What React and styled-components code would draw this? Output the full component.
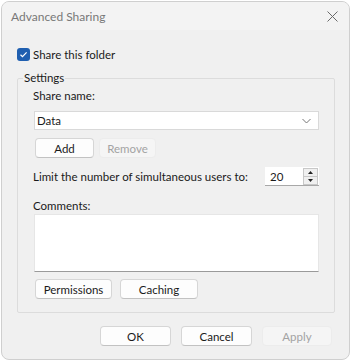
import React from "react";
import styled, { createGlobalStyle } from "styled-components";

const GlobalStyle = createGlobalStyle`
  html, body {
    margin: 0;
    padding: 0;
    background: #ffffff;
  }
  body {
    font-family: Lato, "Noto Sans", sans-serif;
    font-size: 11.5px;
    color: #1a1a1a;
  }
`;

const Window = styled.div`
  box-sizing: border-box;
  width: 349px;
  height: 359px;
  margin: 1px 0 0 1px;
  border: 1px solid #cfcfcf;
  border-radius: 8px;
  background: #f0f0f0;
  overflow: hidden;
  display: flex;
  flex-direction: column;
`;

const TitleBar = styled.div`
  flex-shrink: 0;
  height: 28px;
  display: flex;
  align-items: center;
  justify-content: space-between;
  padding: 0 11px 0 9px;
  background: #f3f3f3;
  color: #787878;
  font-size: 12px;
`;

const Close = styled.svg`
  width: 11px;
  height: 11px;
`;

const Body = styled.div`
  display: flex;
  flex-direction: column;
  padding: 17px 15px 0 15px;
`;

const CheckRow = styled.label`
  display: flex;
  align-items: center;
  gap: 3px;
  height: 14px;
`;

const CheckBox = styled.span`
  width: 13px;
  height: 13px;
  border-radius: 3px;
  background: #1f5fb0;
  display: flex;
  align-items: center;
  justify-content: center;
`;

const Group = styled.fieldset`
  margin: 9px 0 0 0;
  padding: 0 5px;
  width: 318px;
  box-sizing: border-box;
  border: 1px solid #dcdcdc;
  border-radius: 2px;
`;

const Legend = styled.legend`
  padding: 0 1px;
  line-height: 16px;
`;

const GroupInner = styled.div`
  display: flex;
  flex-direction: column;
  padding: 2px 10px 13px 10px;
`;

const FieldLabel = styled.div`
  line-height: 16px;
  height: 16px;
  margin-top: ${(p) => p.top || 0}px;
`;

const Combo = styled.div`
  box-sizing: border-box;
  height: 19px;
  margin: 7px 0 0 1px;
  border: 1px solid #d9d9d9;
  background: #ffffff;
  display: flex;
  align-items: center;
  justify-content: space-between;
  padding: 0 7px 0 2px;
`;

const ButtonRow = styled.div`
  display: flex;
  gap: ${(p) => p.gap || 5}px;
  margin-top: ${(p) => p.top || 0}px;
  padding: 0 ${(p) => (p.end ? 2 : 0)}px 0 ${(p) => (p.end ? 0 : 2)}px;
  justify-content: ${(p) => (p.end ? "flex-end" : "flex-start")};
`;

const Button = styled.button`
  box-sizing: border-box;
  width: ${(p) => p.w}px;
  height: 20px;
  font-family: inherit;
  font-size: 11.5px;
  padding: 0;
  border-radius: 4px;
  border: 1px solid ${(p) => (p.disabled ? "#ececec" : "#d6d6d6")};
  border-bottom-color: ${(p) => (p.disabled ? "#ececec" : "#c2c2c2")};
  background: ${(p) => (p.disabled ? "#f5f5f5" : "#fdfdfd")};
  color: ${(p) => (p.disabled ? "#a3a3a3" : "#1a1a1a")};
`;

const LimitRow = styled.div`
  display: flex;
  align-items: center;
  justify-content: space-between;
  margin-top: 9px;
  white-space: nowrap;
`;

const Spinner = styled.div`
  box-sizing: border-box;
  width: 54px;
  height: 19px;
  display: flex;
  align-items: center;
  background: #ffffff;
  border-bottom: 1px solid #a8a8a8;
`;

const SpinValue = styled.span`
  flex: 1;
  padding-left: 5px;
`;

const SpinButtons = styled.div`
  width: 15px;
  height: 17px;
  margin-right: 1px;
  border: 1px solid #c8c8c8;
  background: #f0f0f0;
  display: flex;
  flex-direction: column;
  box-sizing: border-box;
`;

const SpinHalf = styled.div`
  flex: 1;
  display: flex;
  align-items: center;
  justify-content: center;
  border-top: ${(p) => (p.bottom ? "1px solid #c8c8c8" : "none")};
`;

const TextArea = styled.div`
  box-sizing: border-box;
  height: 58px;
  margin: 0 0 0 1px;
  background: #ffffff;
  border: 1px solid #e6e6e6;
  border-bottom: 1px solid #9a9a9a;
`;

function App() {
  return (
    <>
      <GlobalStyle />
      <Window>
        <TitleBar>
          <span>Advanced Sharing</span>
          <Close viewBox="0 0 11 11">
            <path d="M0.5 0.5L10.5 10.5M10.5 0.5L0.5 10.5" stroke="#6a6a6a" strokeWidth="1" fill="none" />
          </Close>
        </TitleBar>
        <Body>
          <CheckRow>
            <CheckBox>
              <svg width="9" height="9" viewBox="0 0 9 9">
                <path d="M1.5 4.8L3.5 6.7L7.6 2.3" stroke="#fff" strokeWidth="1.2" fill="none" />
              </svg>
            </CheckBox>
            <span>Share this folder</span>
          </CheckRow>
          <Group>
            <Legend>Settings</Legend>
            <GroupInner>
              <FieldLabel>Share name:</FieldLabel>
              <Combo>
                <span>Data</span>
                <svg width="9" height="6" viewBox="0 0 9 6">
                  <path d="M0.5 1L4.5 5L8.5 1" stroke="#777" strokeWidth="1" fill="none" />
                </svg>
              </Combo>
              <ButtonRow top={8}>
                <Button w={59}>Add</Button>
                <Button w={57} disabled>Remove</Button>
              </ButtonRow>
              <LimitRow>
                <span>Limit the number of simultaneous users to:</span>
                <Spinner>
                  <SpinValue>20</SpinValue>
                  <SpinButtons>
                    <SpinHalf>
                      <svg width="5" height="3" viewBox="0 0 5 3">
                        <path d="M0 3L2.5 0L5 3Z" fill="#222" />
                      </svg>
                    </SpinHalf>
                    <SpinHalf bottom>
                      <svg width="5" height="3" viewBox="0 0 5 3">
                        <path d="M0 0L2.5 3L5 0Z" fill="#222" />
                      </svg>
                    </SpinHalf>
                  </SpinButtons>
                </Spinner>
              </LimitRow>
              <FieldLabel top={12}>Comments:</FieldLabel>
              <TextArea />
              <ButtonRow top={7} gap={8}>
                <Button w={77}>Permissions</Button>
                <Button w={78}>Caching</Button>
              </ButtonRow>
            </GroupInner>
          </Group>
          <ButtonRow top={13} gap={10} end>
            <Button w={71}>OK</Button>
            <Button w={71}>Cancel</Button>
            <Button w={70} disabled>Apply</Button>
          </ButtonRow>
        </Body>
      </Window>
    </>
  );
}

export default App;
